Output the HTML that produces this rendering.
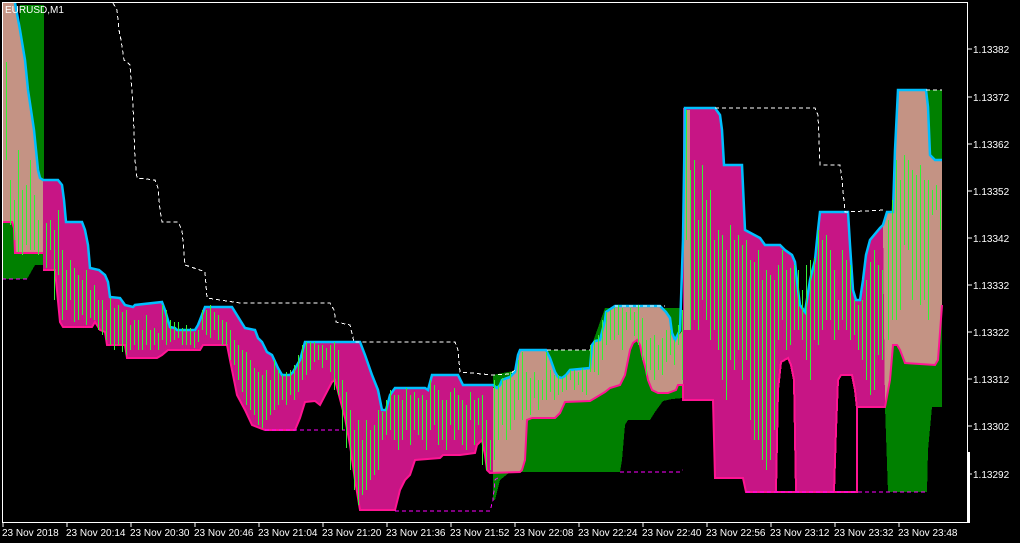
<!DOCTYPE html>
<html><head><meta charset="utf-8"><style>
html,body{margin:0;padding:0;background:#000;width:1020px;height:543px;overflow:hidden}
svg{display:block}
text{font-family:"Liberation Sans",sans-serif;font-size:10px;fill:#fff}
</style></head><body>
<svg width="1020" height="543" viewBox="0 0 1020 543" xmlns="http://www.w3.org/2000/svg" shape-rendering="crispEdges">
<rect width="1020" height="543" fill="#000"/>
<g fill="#008000">
<rect x="20" y="5" width="24" height="175"/>
<polygon points="2,222 43,222 43,265 35,265 27,279 2,279"/>
<polygon points="493,375 518,370 520,350 590,350 605,308 682,308 683,398 672,399 663,401 655,412 650,420 628,420 625,425 622,460 620,472 510,472 505,476 500,480 495,500 493,500"/>
<polygon points="885,407 893,345 900,348 905,363 935,365 942,305 942,407 932,407 928,450 927,492 888,492"/>
<polygon points="926,90 942,90 942,160 935,160 930,155 928,107"/>
</g>
<g fill="#C71585">
<polygon points="43,180 58,180 62,185 64,200 66,222 82,222 85,230 88,245 90,268 99,270 105,275 108,282 110,297 120,298 125,305 133,307 135,305 162,302 165,310 170,327 175,328 177,330 195,330 198,325 200,320 205,307 232,307 240,320 245,328 255,330 258,338 262,342 267,352 272,355 278,368 282,375 290,375 293,372 300,360 305,342 360,342 365,355 372,375 378,390 382,410 386,410 390,395 395,388 425,388 428,390 432,375 458,375 463,385 493,385 493,473 490,473 487,470 485,455 482,440 477,445 475,453 460,455 443,455 440,458 415,460 410,475 405,480 400,490 395,510 360,510 355,480 350,445 345,418 335,380 332,382 320,405 315,401 305,402 300,418 295,430 265,430 252,425 245,410 237,395 230,360 227,345 203,345 200,350 168,350 162,355 157,358 127,358 125,345 107,345 105,332 100,330 95,322 92,327 63,327 60,322 55,270 43,270"/>
<polygon points="683,108 715,108 720,115 722,130 724,165 742,165 745,230 760,238 765,245 780,245 785,250 792,255 795,262 798,290 800,305 805,312 810,280 815,260 818,230 820,212 848,212 850,245 853,290 856,300 860,300 863,280 866,255 870,240 880,228 883,225 885,407 858,407 858,492 746,492 743,478 715,478 713,400 683,400"/>
</g>
<g fill="#C49384">
<polygon points="2,3 15,3 20,30 25,60 28,90 34,130 36,150 38,170 40,178 43,180 43,253 15,253 14,228 12,222 2,222"/>
<polygon points="493,388 497,388 500,385 502,380 510,377 515,372 518,355 520,350 546,350 550,358 555,372 558,377 562,378 566,375 570,370 590,368 592,345 595,341 600,340 605,320 606,312 615,306 660,306 666,312 670,318 672,333 675,340 683,330 683,385 678,385 676,390 668,393 658,393 652,390 648,380 646,370 642,355 640,345 637,340 633,343 630,350 625,375 620,385 610,388 605,392 600,395 590,401 565,402 560,413 555,418 532,418 527,420 525,460 522,470 520,472 493,472"/>
<polygon points="883,225 887,212 893,212 895,150 898,90 926,90 928,107 930,155 935,160 942,160 942,305 938,360 935,365 905,363 900,350 897,345 893,345 890,380 885,407"/>
<rect x="684" y="110" width="6" height="220"/>
</g>
<g fill="#000" stroke="#FF1493" stroke-width="2">
<polygon points="776,492 778,390 781,362 788,358 791,365 794,380 796,492"/>
<polygon points="834,492 836,430 838,380 841,375 852,375 855,390 857,408 857,492"/>
</g>
<g fill="none" stroke="#FF1493" stroke-width="2" shape-rendering="auto">
<polyline points="2,222 12,222 14,228 15,253 43,253"/>
<polyline points="43,270 55,270 60,322 63,327 92,327 95,322 100,330 105,332 107,345 125,345 127,358 157,358 162,355 168,350 200,350 203,345 227,345 230,360 237,395 245,410 252,425 265,430 295,430 300,418 305,402 315,401 320,405 332,382 335,380 345,418 350,445 355,480 360,510 395,510 400,490 405,480 410,475 415,460 440,458 443,455 460,455 475,453 477,445 482,440 485,455 487,470 490,473 520,472 522,470 525,460 527,420 532,418 555,418 560,413 565,402 590,401 600,395 605,392 610,388 620,385 625,375 630,350 633,343 637,340 640,345 642,355 646,370 648,380 652,390 658,393 668,393 676,390 678,385 683,385 683,400 713,400 715,478 743,478 746,492 776,492"/>
<polyline points="796,492 834,492"/>
<polyline points="857,407 885,407 890,380 893,345 897,345 900,350 905,363 935,365 938,360 942,305"/>
</g>
<polyline fill="none" stroke="#00BFFF" stroke-width="2.5" shape-rendering="auto" points="15,3 20,30 25,60 28,90 34,130 36,150 38,170 40,178 43,180 58,180 62,185 64,200 66,222 82,222 85,230 88,245 90,268 99,270 105,275 108,282 110,297 120,298 125,305 133,307 135,305 162,302 165,310 170,327 175,328 177,330 195,330 198,325 200,320 205,307 232,307 240,320 245,328 255,330 258,338 262,342 267,352 272,355 278,368 282,375 290,375 293,372 300,360 305,342 360,342 365,355 372,375 378,390 382,410 386,410 390,395 395,388 425,388 428,390 432,375 458,375 463,385 493,385 497,388 500,385 502,380 510,377 515,372 518,355 520,350 546,350 550,358 555,372 558,377 562,378 566,375 570,370 590,368 592,345 595,341 600,340 605,320 606,312 615,306 660,306 666,312 670,318 672,333 675,340 680,330 683,240 685,108 715,108 720,115 722,130 724,165 742,165 745,230 760,238 765,245 780,245 785,250 792,255 795,262 798,290 800,305 805,312 810,280 815,260 818,230 820,212 848,212 850,245 853,290 856,300 860,300 863,280 866,255 870,240 880,228 883,225 887,212 893,212 895,150 898,90 926,90 928,107 930,155 935,160 942,160"/>
<g fill="none" stroke-width="1" stroke-dasharray="4,3">
<polyline stroke="#fff" points="113,3 117,10 119,30 121,40 124,60 127,62 130,65 131,80 133,105 135,160 137,178 155,180 158,188 160,210 162,222 178,222 182,230 185,265 200,270 205,272 207,298 240,303 330,303 334,310 336,322 350,325 354,342 455,342 458,350 460,372 493,375 510,374 515,370"/>
<polyline stroke="#fff" points="547,350 590,350"/>
<polyline stroke="#fff" points="615,306 665,306"/>
<polyline stroke="#fff" points="715,108 815,108 818,115 820,165 840,165 842,180 845,212 885,210"/>
<polyline stroke="#fff" points="926,90 942,90"/>
<polyline stroke="#FF00FF" points="2,279 27,279"/>
<polyline stroke="#FF00FF" points="265,430 345,430"/>
<polyline stroke="#FF00FF" points="395,511 490,511 493,500 495,480 500,476"/>
<polyline stroke="#FF00FF" points="620,472 680,472 683,470"/>
<polyline stroke="#FF00FF" points="746,492 928,492"/>
</g>
<path transform="translate(0.5,0)" fill="none" stroke="#33F233" stroke-width="1" d="
M6 62V160 M10 180V225 M14 200V240 M18 150V252 M22 190V255 M26 185V245 M30 160V250 M34 195V250 M38 220V255
M46 223V268 M50 220V250 M54 230V300 M58 210V275 M62 250V320 M66 270V310 M70 260V300 M74 268V322 M78 275V320 M82 280V315 M86 270V325 M90 290V318 M94 285V320 M98 300V330 M102 300V335 M106 310V340 M110 298V345 M114 308V350 M118 305V345 M122 312V352 M126 310V355 M130 325V350 M134 320V345 M138 320V350 M142 330V350 M146 315V345 M150 330V350 M154 328V345 M158 333V350
M162 305V340 M166 310V345 M170 320V342 M174 322V340 M178 322V338 M182 328V345 M186 325V345 M190 328V345 M194 332V348 M198 330V342 M202 310V330 M206 310V335 M210 305V338 M214 312V330 M218 315V340 M222 320V345 M226 322V345 M230 330V360 M234 340V365 M238 345V380 M242 350V392 M246 352V405 M250 360V410 M254 368V415 M258 372V425 M262 375V428 M266 370V420 M270 380V415 M274 360V410 M278 370V405 M282 375V400 M286 372V405 M290 370V395 M294 365V400 M298 355V392 M302 345V380 M306 342V375 M310 342V370 M314 342V362 M318 345V360 M322 345V368 M326 348V360 M330 345V372 M334 342V390 M338 350V395 M342 380V430 M346 392V448 M350 410V470 M354 430V490 M358 420V505 M362 440V495 M366 420V490 M370 430V480 M374 425V475 M378 410V470 M382 412V440 M386 400V435 M390 390V430 M394 395V440 M398 395V450 M402 400V440 M406 388V430 M410 395V445 M414 392V430 M418 398V435 M422 395V440 M426 400V450 M430 380V430 M434 385V425 M438 390V445 M442 400V440 M446 400V450 M450 392V425 M454 388V440 M458 395V430 M462 400V445 M466 405V450 M470 392V420 M474 400V445 M478 398V425 M482 395V465 M486 420V470 M490 440V470
M494 380V460 M498 385V440 M502 378V425 M506 380V440 M510 372V430 M514 380V420 M518 360V400 M522 352V420 M526 372V410 M530 378V415 M534 372V398 M538 380V410 M542 380V400 M546 352V400 M550 370V392 M554 375V400 M558 375V395 M562 378V392 M566 375V390 M570 370V380 M574 370V390 M578 372V385 M582 368V392 M586 370V395 M590 345V372 M594 340V372 M598 335V375 M602 320V360 M606 312V345 M610 310V340 M614 308V340 M618 305V335 M622 308V350 M626 312V330 M630 308V320 M634 312V336 M638 305V345 M642 318V360 M646 340V375 M650 338V370 M654 335V380 M658 345V370 M662 338V375 M666 330V362 M670 330V355 M674 340V365 M678 325V345 M682 310V380
M686 110V240 M690 170V330 M694 160V320 M698 220V330 M702 165V300 M706 200V320 M710 190V340 M714 240V330 M718 230V350 M722 235V380 M726 250V400 M730 225V360 M734 240V370 M738 235V350 M742 245V380 M746 240V360 M750 260V420 M754 262V440 M758 250V440 M762 280V460 M766 270V470 M770 275V460 M774 280V430 M778 265V340 M782 250V320 M786 270V350 M790 268V345 M794 265V330 M798 270V330 M802 290V340 M806 265V360 M810 260V380 M814 258V340 M818 230V345 M822 240V330 M826 235V320 M830 250V320 M834 270V340 M838 300V330 M842 250V320 M846 260V330 M850 265V340 M854 300V335 M858 305V350 M862 300V360 M866 280V380 M870 262V395 M874 250V390 M878 265V355 M882 270V360
M888 220V340 M892 200V320 M896 160V320 M900 180V310 M904 155V245 M908 160V250 M912 170V300 M916 175V280 M920 165V305 M924 180V300 M928 180V320 M932 190V215 M936 185V210 M940 190V230"/>
<rect x="2.5" y="2.5" width="965" height="520" fill="none" stroke="#fff" stroke-width="1"/>
<rect x="967" y="452" width="3" height="71" fill="#fff"/>
<text x="5" y="13">EURUSD,M1</text>
<g stroke="#fff"><path d="M968 49H972M968 97H972M968 144H972M968 191H972M968 238H972M968 285H972M968 332H972M968 379H972M968 426H972M968 474H972"/></g>
<g>
<text x="973" y="53">1.13382</text><text x="973" y="101">1.13372</text><text x="973" y="148">1.13362</text><text x="973" y="195">1.13352</text><text x="973" y="242">1.13342</text><text x="973" y="289">1.13332</text><text x="973" y="336">1.13322</text><text x="973" y="383">1.13312</text><text x="973" y="430">1.13302</text><text x="973" y="478">1.13292</text>
</g>
<g stroke="#fff"><path d="M3 522V527M67 522V527M131 522V527M195 522V527M259 522V527M323 522V527M387 522V527M451 522V527M515 522V527M579 522V527M643 522V527M707 522V527M771 522V527M835 522V527M899 522V527"/></g>
<g>
<text x="2" y="536">23 Nov 2018</text><text x="66" y="536">23 Nov 20:14</text><text x="130" y="536">23 Nov 20:30</text><text x="194" y="536">23 Nov 20:46</text><text x="258" y="536">23 Nov 21:04</text><text x="322" y="536">23 Nov 21:20</text><text x="386" y="536">23 Nov 21:36</text><text x="450" y="536">23 Nov 21:52</text><text x="514" y="536">23 Nov 22:08</text><text x="578" y="536">23 Nov 22:24</text><text x="642" y="536">23 Nov 22:40</text><text x="706" y="536">23 Nov 22:56</text><text x="770" y="536">23 Nov 23:12</text><text x="834" y="536">23 Nov 23:32</text><text x="898" y="536">23 Nov 23:48</text>
</g>
</svg>
</body></html>
